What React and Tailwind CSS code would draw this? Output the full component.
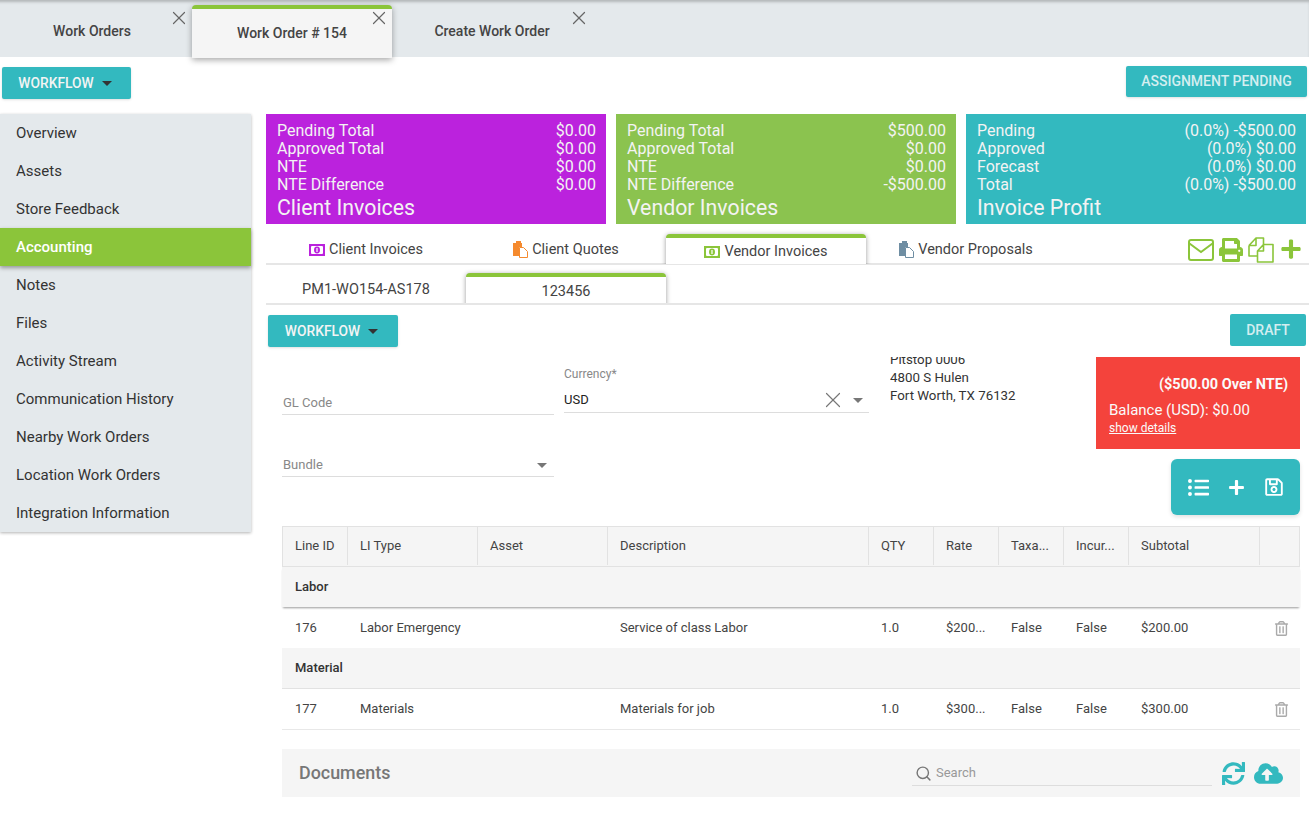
import { FaPrint, FaPlus, FaListUl, FaRegSave, FaSync, FaCloudUploadAlt, FaRegTrashAlt } from 'react-icons/fa';
import { X, Search } from 'lucide-react';

const sideItems = ['Overview', 'Assets', 'Store Feedback', 'Accounting', 'Notes', 'Files', 'Activity Stream', 'Communication History', 'Nearby Work Orders', 'Location Work Orders', 'Integration Information'];

const cards = [
  { bg: 'bg-[#bb22dd]', title: 'Client Invoices', rows: [['Pending Total', '$0.00'], ['Approved Total', '$0.00'], ['NTE', '$0.00'], ['NTE Difference', '$0.00']] },
  { bg: 'bg-[#8bc34f]', title: 'Vendor Invoices', rows: [['Pending Total', '$500.00'], ['Approved Total', '$0.00'], ['NTE', '$0.00'], ['NTE Difference', '-$500.00']] },
  { bg: 'bg-[#33b9bf]', title: 'Invoice Profit', rows: [['Pending', '(0.0%) -$500.00'], ['Approved', '(0.0%) $0.00'], ['Forecast', '(0.0%) $0.00'], ['Total', '(0.0%) -$500.00']] },
];

const cols = [
  { label: 'Line ID', w: 'w-[65px]' },
  { label: 'LI Type', w: 'w-[130px]' },
  { label: 'Asset', w: 'w-[130px]' },
  { label: 'Description', w: 'w-[261px]' },
  { label: 'QTY', w: 'w-[65px]' },
  { label: 'Rate', w: 'w-[65px]' },
  { label: 'Taxa...', w: 'w-[65px]' },
  { label: 'Incur...', w: 'w-[65px]' },
  { label: 'Subtotal', w: 'w-[131px]' },
  { label: '', w: 'flex-1' },
];

const rowCols = ['w-[66px] pl-[13px]', 'w-[130px] pl-[12px]', 'w-[130px] pl-[12px]', 'w-[261px] pl-[12px]', 'w-[65px] pl-[12px]', 'w-[65px] pl-[12px]', 'w-[65px] pl-[12px]', 'w-[65px] pl-[12px]', 'w-[131px] pl-[12px]'];

const groups = [
  { name: 'Labor', line: ['176', 'Labor Emergency', '', 'Service of class Labor', '1.0', '$200...', 'False', 'False', '$200.00'], first: true },
  { name: 'Material', line: ['177', 'Materials', '', 'Materials for job', '1.0', '$300...', 'False', 'False', '$300.00'], first: false },
];

function Bill({ color }) {
  return (
    <svg width="16" height="12" viewBox="0 0 16 12" className="shrink-0">
      <rect width="16" height="12" fill={color} />
      <rect x="2" y="2" width="12" height="8" rx="1" fill="#fff" />
      <ellipse cx="8" cy="6" rx="3" ry="3.4" fill={color} />
      <rect x="7.4" y="4" width="1.2" height="4" fill="#fff" />
    </svg>
  );
}

function Docs({ color }) {
  return (
    <svg width="15" height="17" viewBox="0 0 15 17" className="shrink-0">
      <path d="M0 2h3V0h5v2h1v4H6v9H0z" fill={color} />
      <path d="M6.5 6.5h4l4 4v6h-8z" fill="#fff" stroke={color} />
    </svg>
  );
}

function Caret({ className }) {
  return (
    <svg width="10" height="5" viewBox="0 0 10 5" className={className}>
      <path d="M0 0h10L5 5z" fill="currentColor" />
    </svg>
  );
}

function TopTab({ label, active }) {
  if (active) {
    return (
      <div className="relative z-10 w-[200px] h-[53px] mt-[5px] -mb-px bg-[#f5f5f5] border-t-4 border-[#8bc53a] rounded-t shadow-[0_2px_6px_rgba(0,0,0,.35)] flex items-center justify-center text-[14px] font-medium text-[#444]">
        {label}
        <X size={22} strokeWidth={1.3} className="absolute right-[2px] -top-[2px] text-[#666]" />
      </div>
    );
  }
  return (
    <div className="relative w-[200px] h-[57px] flex items-center justify-center pt-[5px] text-[14px] font-medium text-[#444]">
      {label}
      <X size={22} strokeWidth={1.3} className="absolute right-[2px] top-[7px] text-[#666]" />
    </div>
  );
}

function WorkflowBtn({ className }) {
  return (
    <button className={`h-[32px] bg-[#33b9bf] rounded-[2px] flex items-center justify-center gap-[8px] pr-[3px] text-[#f4f4f4] font-medium text-[13.8px] shadow-sm ${className}`}>
      WORKFLOW
      <Caret className="text-[#333]" />
    </button>
  );
}

function InvoiceTab({ icon, label, active }) {
  if (active) {
    return (
      <div className="w-[216px] h-[36px] -mx-[8px] px-[8px] pt-[6px] mb-[-1px] overflow-hidden z-10">
        <div className="w-[200px] h-[40px] bg-white border-t-4 border-[#8bc53a] rounded-t shadow-[0_1px_5px_rgba(0,0,0,.4)]">
          <div className="h-[27px] flex items-center justify-center gap-[4px] text-[14.5px] text-[#444]">
            {icon}{label}
          </div>
        </div>
      </div>
    );
  }
  return (
    <div className="w-[200px] h-[30px] pt-[3px] flex items-center justify-center gap-[4px] text-[14.5px] text-[#444]">
      {icon}{label}
    </div>
  );
}

export default function App() {
  return (
    <div className="relative w-[1309px] h-[827px] overflow-hidden bg-white text-[#333] font-['Roboto',sans-serif]">
      {/* tab strip */}
      <div className="h-[57px] bg-[#e4e9ec] shadow-[inset_0_3px_3px_-1px_rgba(0,0,0,.22)] flex -ml-[8px]">
        <TopTab label="Work Orders" />
        <TopTab label="Work Order # 154" active />
        <TopTab label="Create Work Order" />
      </div>

      <div className="h-[57px] flex items-start justify-between pl-[2px] pr-[2px] pt-[9px]">
        <WorkflowBtn className="w-[129px] mt-px" />
        <div className="w-[181px] h-[31px] bg-[#33b9bf] rounded-[2px] flex items-center justify-center text-[14px] font-medium text-[#d4eef0] shadow-sm">ASSIGNMENT PENDING</div>
      </div>

      <div className="flex">
        {/* side nav */}
        <div className="w-[251px] h-[418px] bg-[#e4e9ec] shadow-[0_1px_3px_rgba(0,0,0,.3)] shrink-0">
          {sideItems.map(item => (
            <div
              key={item}
              className={item === 'Accounting'
                ? 'h-[38px] pt-px flex items-center pl-[16px] text-[15px] font-medium text-white bg-[#8bc53a] shadow-[0_2px_4px_rgba(0,0,0,.35)] relative'
                : 'h-[38px] pt-px flex items-center pl-[16px] text-[15px] text-[#333]'}
            >
              {item}
            </div>
          ))}
        </div>

        <div className="ml-[15px] w-[1043px]">
          {/* totals */}
          <div className="flex gap-[10px]">
            {cards.map(c => (
              <div key={c.title} className={`w-[340px] h-[110px] ${c.bg} text-[#f3f3f3] pl-[11px] pr-[10px] pt-[8px]`}>
                {c.rows.map(([a, b]) => (
                  <div key={a} className="flex justify-between text-[16px] leading-[18px]">
                    <span>{a}</span><span>{b}</span>
                  </div>
                ))}
                <div className="text-[21.3px] leading-[28px]">{c.title}</div>
              </div>
            ))}
          </div>

          {/* invoice tabs */}
          <div className="h-[31px] mt-[10px] border-b-2 border-[#e6e6e6] flex items-end relative">
            <InvoiceTab icon={<Bill color="#bb22dd" />} label="Client Invoices" />
            <InvoiceTab icon={<Docs color="#f58a2e" />} label="Client Quotes" />
            <InvoiceTab icon={<Bill color="#8bc53a" />} label="Vendor Invoices" active />
            <InvoiceTab icon={<Docs color="#6f8ea3" />} label="Vendor Proposals" />
            <div className="absolute right-[8px] top-[3px] flex items-center text-[#8bc53a]">
              <svg width="26" height="22" viewBox="0 0 26 22" fill="none" stroke="currentColor" strokeWidth="2">
                <rect x="1" y="1" width="24" height="20" rx="2" />
                <path d="M1.5 4.5 13 13l11.5-8.5" />
              </svg>
              <FaPrint size={24} className="ml-[5px]" />
              <svg width="26" height="26" viewBox="0 0 26 26" fill="none" stroke="currentColor" strokeWidth="1.6" strokeLinejoin="round" className="ml-[5px]">
                <path d="M1 8.5 8 1h7.5v6M1 8.5V19h8.5M1 8.5h7V1" />
                <path d="M9.5 14l6-6.5H25V25H9.5zM15.5 7.5V14h-6" />
              </svg>
              <FaPlus size={22} className="ml-[6px] -mr-px -mt-[3px]" />
            </div>
          </div>

          {/* sub tabs */}
          <div className="h-[40px] border-b-2 border-[#e6e6e6] flex items-end">
            <div className="w-[200px] h-[27px] flex items-center justify-center text-[14.5px] text-[#444]">PM1-WO154-AS178</div>
            <div className="overflow-hidden -mx-[8px] px-[8px] pt-[9px] h-[39px] z-10">
              <div className="w-[200px] h-[40px] bg-white border-t-4 border-[#8bc53a] rounded-t shadow-[0_1px_5px_rgba(0,0,0,.4)] pt-[4px] text-center text-[14.5px] text-[#444]">123456</div>
            </div>
          </div>

          <div className="flex items-start justify-between pl-[2px] pr-[3px] pt-[10px]">
            <WorkflowBtn className="w-[130px]" />
            <div className="w-[76px] h-[32px] -mt-px bg-[#33b9bf] rounded-[2px] flex items-center justify-center text-[14px] font-medium text-[#d4eef0]">DRAFT</div>
          </div>

          <div className="pl-[16px] pr-[9px]">
            {/* form */}
            <div className="h-[171px] mt-[8px] flex">
              <div className="w-[272px] shrink-0">
                <div className="h-[60px] border-b border-[#dddddd] flex items-end pl-px pb-[2px] text-[13px] text-[#888]">GL Code</div>
                <div className="h-[62px] border-b border-[#dddddd] flex items-end justify-between pl-px pb-[2px] text-[13px] text-[#888]">
                  Bundle
                  <Caret className="text-[#777] mr-[7px] mb-[6px]" />
                </div>
              </div>
              <div className="w-[305px] ml-[10px] shrink-0">
                <div className="h-[58px] border-b border-[#dddddd]">
                  <div className="text-[12px] text-[#888] pt-[12px] leading-[14px]">Currency*</div>
                  <div className="flex items-center justify-between mt-[7px] h-[24px] text-[13px] text-[#222] leading-[16px]">
                    USD
                    <div className="flex items-center mr-[6px] gap-[7px] text-[#777]">
                      <X size={26} strokeWidth={1.1} />
                      <Caret />
                    </div>
                  </div>
                </div>
              </div>
              <div className="w-[206px] ml-[21px] shrink-0 h-[50px] mt-[2px] overflow-hidden text-[13.3px] leading-[18px] text-[#333]">
                <div className="-mt-[6px]">
                  <div>Pitstop 0006</div>
                  <div>4800 S Hulen</div>
                  <div>Fort Worth, TX 76132</div>
                </div>
              </div>
              <div className="w-[204px] shrink-0 flex flex-col items-end">
                <div className="w-[204px] h-[92px] mt-[2px] bg-[#f4433c] text-[#fafafa] pl-[13px] pr-[12px] pt-[20px]">
                  <div className="text-right text-[14.5px] font-bold leading-[16px]">($500.00 Over NTE)</div>
                  <div className="text-[15px] leading-[18px] mt-[8px]">Balance (USD): $0.00</div>
                  <div className="text-[12px] underline leading-[14px] mt-[2px]">show details</div>
                </div>
                <div className="w-[129px] h-[56px] mt-[10px] pl-px bg-[#33b9bf] rounded-md shadow-[0_2px_4px_rgba(0,0,0,.12)] flex items-center justify-center gap-[19px] text-white">
                  <FaListUl size={21} />
                  <FaPlus size={17} />
                  <FaRegSave size={20} />
                </div>
              </div>
            </div>

            {/* line items */}
            <div className="h-[41px] pb-px bg-[#f5f5f5] border border-[#e2e2e2] flex">
              {cols.map((c, i) => (
                <div key={i} className={`${c.w} pl-[12px] border-r border-[#e2e2e2] last:border-r-0 flex items-center text-[13px] text-[#444]`}>{c.label}</div>
              ))}
            </div>
            {groups.map(g => (
              <div key={g.name}>
                <div className={`bg-[#f5f5f5] flex items-center pl-[13px] text-[13px] font-medium text-[#333] ${g.first ? 'h-[40px] shadow-[0_2px_2px_-1px_rgba(0,0,0,.4)] relative' : 'h-[41px] border-b border-[#e2e2e2]'}`}>{g.name}</div>
                <div className={`h-[41px] flex items-center text-[13px] text-[#444] ${g.first ? 'pt-px' : 'border-b border-[#e8e8e8]'}`}>
                  {g.line.map((v, i) => (
                    <div key={i} className={`${rowCols[i]} shrink-0`}>{v}</div>
                  ))}
                  <div className="flex-1 flex justify-end pr-[11px]">
                    <FaRegTrashAlt size={15} className="text-[#aaa]" />
                  </div>
                </div>
              </div>
            ))}

            {/* documents */}
            <div className="h-[48px] mt-[19px] bg-[#f5f5f5] flex items-center pl-[17px] pr-[17px]">
              <div className="text-[17.9px] font-medium text-[#777]">Documents</div>
              <div className="ml-auto w-[300px] h-[24px] border-b border-[#dddddd] flex items-center pl-[3px] gap-[4px] text-[13px] text-[#999] mt-[1px]">
                <Search size={17} strokeWidth={2} className="text-[#777]" />
                Search
              </div>
              <FaSync size={23} className="text-[#33b9bf] ml-[10px]" />
              <FaCloudUploadAlt size={29} className="text-[#33b9bf] ml-[9px]" />
            </div>
          </div>
        </div>
      </div>
    </div>
  );
}
